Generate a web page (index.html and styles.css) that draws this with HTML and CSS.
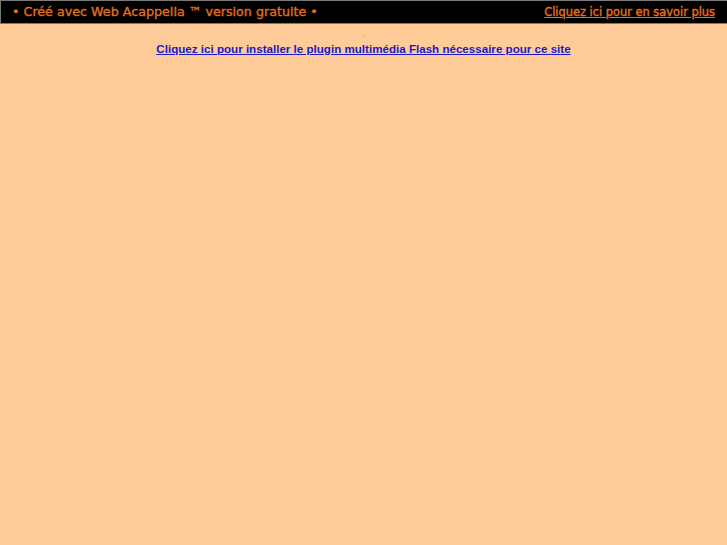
FILE: index.html
```html
<!DOCTYPE html>
<html lang="fr">
<head>
<meta charset="utf-8">
<title>Web Acappella</title>
<link rel="stylesheet" href="styles.css">
</head>
<body>
<div class="bar">
  <span class="brand">• Créé avec Web Acappella ™ version gratuite •</span>
  <a class="more" href="#">Cliquez ici pour en savoir plus</a>
</div>
<div class="main">
  <div class="dot"></div>
  <a class="flash" href="#">Cliquez ici pour installer le plugin multimédia Flash nécessaire pour ce site</a>
</div>
</body>
</html>
```
FILE: styles.css
```css
html, body {
  margin: 0;
  padding: 0;
  background: #ffcc99;
}
body {
  height: 545px;
}
.bar {
  display: flex;
  justify-content: space-between;
  align-items: center;
  box-sizing: border-box;
  height: 24px;
  background: #000;
  border: 1px solid #7a7a7a;
  border-right: none;
  padding: 0 12px 0 11px;
}
.brand {
  font-family: "DejaVu Sans", sans-serif;
  font-size: 12.7px;
  color: #e0701f;
  -webkit-text-stroke: 0.35px #e0701f;
  padding-bottom: 2px;
}
.more {
  font-family: "DejaVu Sans", sans-serif;
  font-size: 11.4px;
  color: #e0701f;
  -webkit-text-stroke: 0.4px #e0701f;
  text-decoration: underline;
}
.main {
  display: flex;
  flex-direction: column;
  align-items: center;
  padding-top: 12px;
}
.dot {
  width: 1px;
  height: 1px;
  background: #a08870;
  margin-bottom: 5px;
}
.flash {
  font-family: "Liberation Sans", Arial, sans-serif;
  font-size: 11.6px;
  font-weight: bold;
  color: #1a1acc;
  text-decoration: underline;
}
```
